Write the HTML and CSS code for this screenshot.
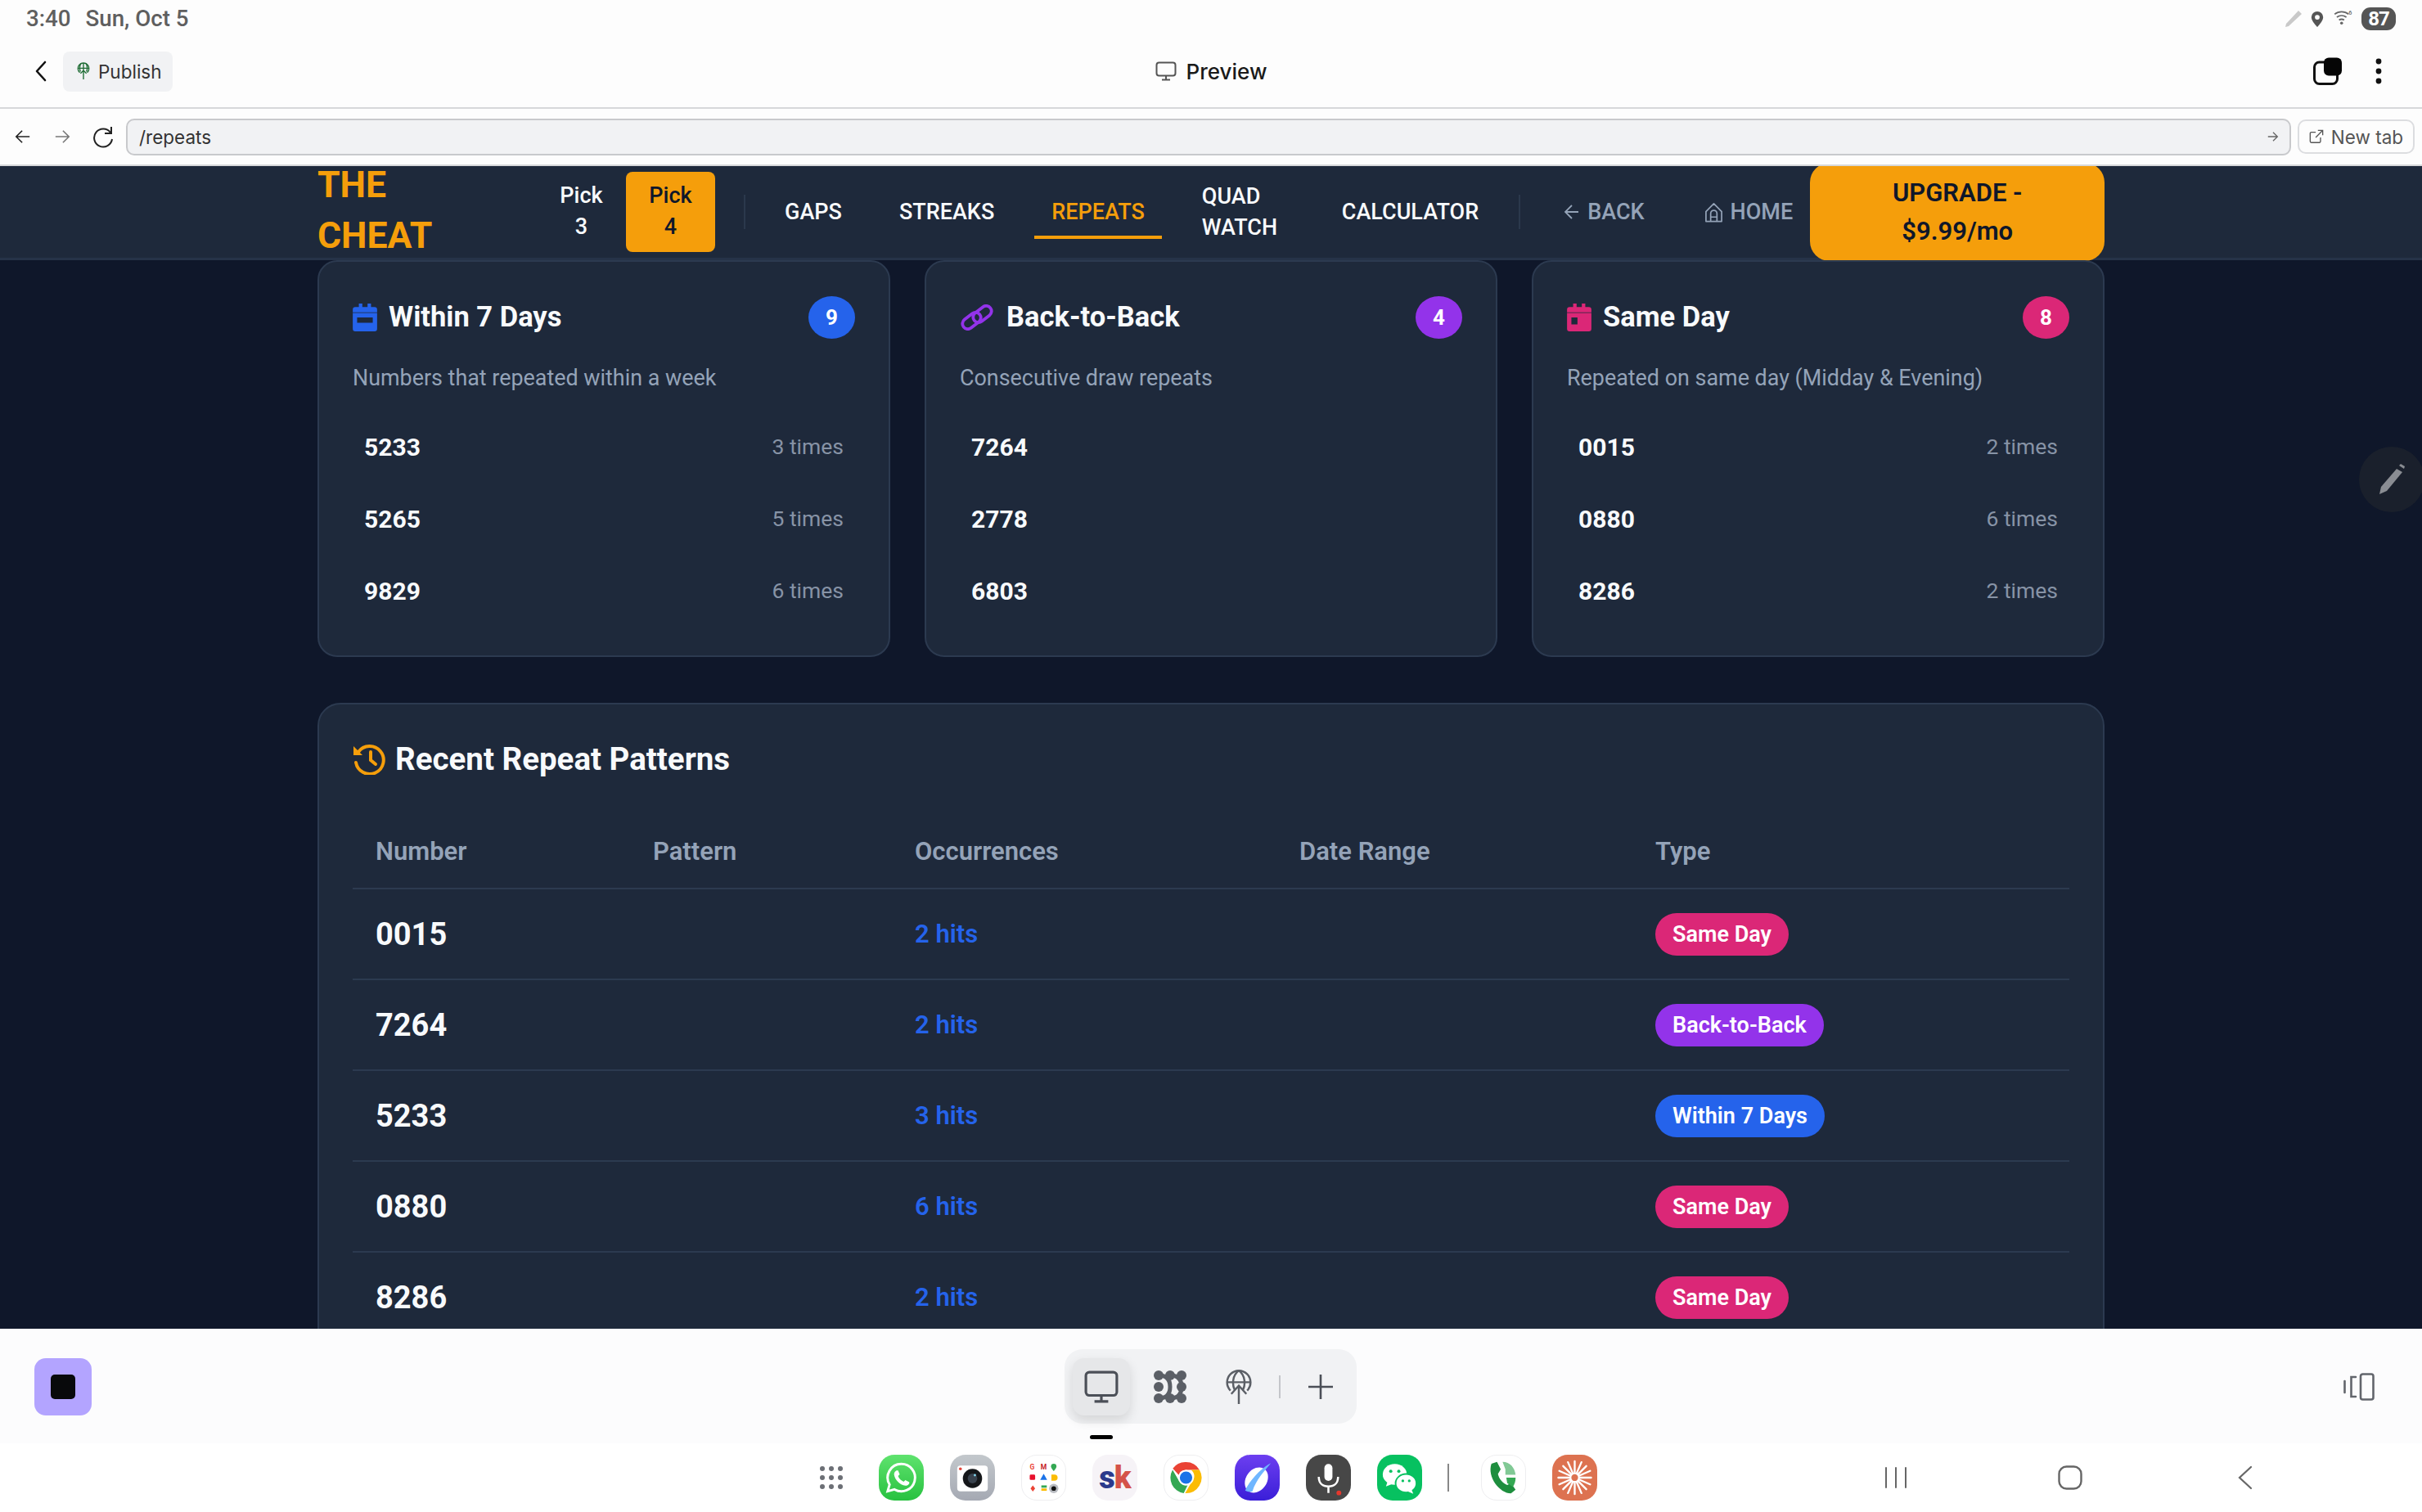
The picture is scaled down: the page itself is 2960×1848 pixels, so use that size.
FILE: index.html
```html
<!DOCTYPE html>
<html lang="en">

<head>
    <meta charset="UTF-8">
    <meta name="viewport" content="width=device-width, initial-scale=1.0">
    <title>Repeats</title>
    <link rel="stylesheet" href="styles.css">
</head>

<body>
    <div class="device">
        <!-- status bar -->
        <div class="status">
            <span class="clock">3:40</span>
            <span class="date">Sun, Oct 5</span>
            <div class="status_icons">
                <svg class="st_pen" viewBox="0 0 22 22"><path d="M17 1l4 4L5 20l-4 1 1-4z" fill="#c9c9c9"/></svg>
                <svg class="st_pin" viewBox="0 0 20 26"><path d="M10 1a9 9 0 0 0-9 9c0 6 9 15 9 15s9-9 9-15a9 9 0 0 0-9-9z" fill="#555"/><circle cx="10" cy="10" r="3.600" fill="#fff"/></svg>
                <svg class="st_wifi" viewBox="0 0 26 20"><g fill="none" stroke="#666" stroke-width="2"><path d="M1 6a15 15 0 0 1 19 0"/><path d="M4 10a11 11 0 0 1 13 0"/><path d="M7 14a6 6 0 0 1 7 0"/></g><circle cx="10.500" cy="18" r="2" fill="#666"/><text x="20" y="7" class="st_six">6</text></svg>
                <span class="battery">87</span>
            </div>
        </div>

        <!-- app bar -->
        <div class="appbar">
            <div class="appbar_left">
                <svg class="chev" viewBox="0 0 20 28"><path d="M15 3L5 14l10 11" fill="none" stroke="#111" stroke-width="2.600" stroke-linecap="round" stroke-linejoin="round"/></svg>
                <div class="publish">
                    <svg class="publish_icon" viewBox="0 0 20 24"><g fill="none" stroke="#1d6b33" stroke-width="1.500"><path d="M5 14a7.500 7.500 0 1 1 10 0"/><path d="M2.500 8h15M10 1v22M6.500 1.500c-2 4-2 8-.5 11M13.500 1.500c2 4 2 8 .5 11M6 15l4-4 4 4"/></g></svg>
                    <span>Publish</span>
                </div>
            </div>
            <div class="preview">
                <svg class="preview_icon" viewBox="0 0 26 24"><rect x="1.500" y="1.500" width="23" height="16" rx="3" fill="none" stroke="#555" stroke-width="2"/><path d="M13 18v4M8 22.500h10" stroke="#555" stroke-width="2"/></svg>
                <span>Preview</span>
            </div>
            <div class="appbar_right">
                <svg class="tabs_icon" viewBox="0 0 36 34"><rect x="1.500" y="6" width="28" height="26.500" rx="6" fill="none" stroke="#111" stroke-width="3"/><rect x="13" y="0.500" width="22" height="22" rx="6" fill="#050505"/></svg>
                <svg class="more_icon" viewBox="0 0 8 32"><circle cx="4" cy="4" r="3.400" fill="#111"/><circle cx="4" cy="16" r="3.400" fill="#111"/><circle cx="4" cy="28" r="3.400" fill="#111"/></svg>
            </div>
        </div>

        <!-- url bar -->
        <div class="urlbar">
            <svg class="url_btn" viewBox="0 0 22 22"><path d="M20 11H3M10 3l-8 8 8 8" fill="none" stroke="#222" stroke-width="1.800"/></svg>
            <svg class="url_btn" viewBox="0 0 22 22"><path d="M2 11h17M12 3l8 8-8 8" fill="none" stroke="#777" stroke-width="1.800"/></svg>
            <svg class="url_reload" viewBox="0 0 28 28"><path d="M23 9a11 11 0 1 0 2 8" fill="none" stroke="#222" stroke-width="2"/><path d="M24 2v8h-8" fill="none" stroke="#222" stroke-width="2"/></svg>
            <div class="url_input">
                <span>/repeats</span>
                <svg class="url_go" viewBox="0 0 18 18"><path d="M2 9h13M9 3l6 6-6 6" fill="none" stroke="#666" stroke-width="1.500"/></svg>
            </div>
            <div class="newtab">
                <svg class="newtab_icon" viewBox="0 0 20 20"><path d="M9 4H3a1.500 1.500 0 0 0-1.500 1.500v11A1.500 1.500 0 0 0 3 18h11a1.500 1.500 0 0 0 1.500-1.500V11M9 11L18 2M12 1.500h6.500V8" fill="none" stroke="#555" stroke-width="1.500"/></svg>
                <span>New tab</span>
            </div>
        </div>

        <!-- the page in the webview -->
        <div class="view">
            <div class="topnav">
                <div class="topnav_in">
                    <div class="logo">THE<br>CHEAT</div>
                    <div class="picks">
                        <div class="pick">Pick<br>3</div>
                        <div class="pick pick_on">Pick<br>4</div>
                    </div>
                    <div class="nav_sep first_sep"></div>
                    <div class="links">
                        <a class="link">GAPS</a>
                        <a class="link">STREAKS</a>
                        <a class="link link_on">REPEATS</a>
                        <a class="link link_quad">QUAD<br>WATCH</a>
                        <a class="link">CALCULATOR</a>
                    </div>
                    <div class="nav_sep second_sep"></div>
                    <a class="link link_dim link_back">
                        <svg class="back_icon" viewBox="0 0 20 22"><path d="M18 11H3M10 3l-8 8 8 8" fill="none" stroke="#94a3b8" stroke-width="1.800"/></svg>BACK</a>
                    <a class="link link_dim link_home">
                        <svg class="home_icon" viewBox="0 0 24 26"><path d="M2 12L12 2l10 10v12.500H2zM8 24.500V14.500a4 4 0 0 1 8 0v10M8 19h8" fill="none" stroke="#94a3b8" stroke-width="1.800" stroke-linejoin="round"/></svg>HOME</a>
                    <div class="upgrade">UPGRADE -<br>$9.99/mo</div>
                </div>
            </div>

            <div class="container">
                <div class="cards">
                    <div class="card">
                        <div class="card_head">
                            <svg class="card_icon cal" viewBox="0 0 28 32"><path d="M3 4h4V0h4v4h6V0h4v4h4a3 3 0 0 1 3 3v3H0V7a3 3 0 0 1 3-3zM0 10.800h28V29a3 3 0 0 1-3 3H3a3 3 0 0 1-3-3zM5 16v6h18v-6z" fill="#2563eb" fill-rule="evenodd"/></svg>
                            <span class="card_title">Within 7 Days</span>
                            <span class="count bg_blue">9</span>
                        </div>
                        <p class="desc">Numbers that repeated within a week</p>
                        <div class="row"><b>5233</b><span>3 times</span></div>
                        <div class="row"><b>5265</b><span>5 times</span></div>
                        <div class="row"><b>9829</b><span>6 times</span></div>
                    </div>
                    <div class="card">
                        <div class="card_head">
                            <svg class="card_icon link_icon" viewBox="0 0 42 32"><g fill="none" stroke="#9333ea" stroke-width="3.800"><rect x="-12.500" y="-6.500" width="25" height="13" rx="6.500" transform="translate(14.500 20) rotate(-38)"/><rect x="-12.500" y="-6.500" width="25" height="13" rx="6.500" transform="translate(27.500 12) rotate(-38)"/></g></svg>
                            <span class="card_title">Back-to-Back</span>
                            <span class="count bg_purple">4</span>
                        </div>
                        <p class="desc">Consecutive draw repeats</p>
                        <div class="row"><b>7264</b></div>
                        <div class="row"><b>2778</b></div>
                        <div class="row"><b>6803</b></div>
                    </div>
                    <div class="card">
                        <div class="card_head">
                            <svg class="card_icon cal" viewBox="0 0 28 32"><path d="M3 4h4V0h4v4h6V0h4v4h4a3 3 0 0 1 3 3v3H0V7a3 3 0 0 1 3-3zM0 10.800h28V29a3 3 0 0 1-3 3H3a3 3 0 0 1-3-3zM5 16v8h7v-8z" fill="#db2777" fill-rule="evenodd"/></svg>
                            <span class="card_title">Same Day</span>
                            <span class="count bg_pink">8</span>
                        </div>
                        <p class="desc">Repeated on same day (Midday &amp; Evening)</p>
                        <div class="row"><b>0015</b><span>2 times</span></div>
                        <div class="row"><b>0880</b><span>6 times</span></div>
                        <div class="row"><b>8286</b><span>2 times</span></div>
                    </div>
                </div>

                <div class="recent">
                    <h2 class="recent_title">
                        <svg class="recent_icon" viewBox="0 0 40 38"><g fill="none" stroke="#f59e0b" stroke-width="4" stroke-linecap="round"><path d="M7 10a17 17 0 1 1-3 13"/><path d="M22 10v10l6 5"/></g><path d="M1 3v11h11z" fill="#f59e0b"/></svg>
                        Recent Repeat Patterns
                    </h2>
                    <table class="patterns">
                        <thead>
                            <tr>
                                <th class="col_num">Number</th>
                                <th class="col_pat">Pattern</th>
                                <th class="col_occ">Occurrences</th>
                                <th class="col_date">Date Range</th>
                                <th>Type</th>
                            </tr>
                        </thead>
                        <tbody>
                            <tr><td class="num">0015</td><td></td><td class="hits">2 hits</td><td></td><td><span class="tag bg_pink">Same Day</span></td></tr>
                            <tr><td class="num">7264</td><td></td><td class="hits">2 hits</td><td></td><td><span class="tag bg_purple">Back-to-Back</span></td></tr>
                            <tr><td class="num">5233</td><td></td><td class="hits">3 hits</td><td></td><td><span class="tag bg_blue">Within 7 Days</span></td></tr>
                            <tr><td class="num">0880</td><td></td><td class="hits">6 hits</td><td></td><td><span class="tag bg_pink">Same Day</span></td></tr>
                            <tr><td class="num">8286</td><td></td><td class="hits">2 hits</td><td></td><td><span class="tag bg_pink">Same Day</span></td></tr>
                        </tbody>
                    </table>
                </div>
            </div>

            <!-- floating pen handle -->
            <div class="fab">
                <svg viewBox="0 0 36 40" class="fab_icon"><path d="M25 7l7 4-19 23-9 4 2-9z" fill="#8a8d93"/><path d="M28 3l2-2 5 3-1 3z" fill="#8a8d93"/></svg>
            </div>
        </div>

        <!-- bottom tool strip -->
        <div class="tools">
            <div class="stop"><div class="stop_in"></div></div>
            <div class="tool_mid">
                <div class="tool_pill">
                    <div class="tool tool_on">
                        <svg viewBox="0 0 40 40" class="tool_svg"><rect x="2" y="3" width="36" height="27" rx="4" fill="none" stroke="#4b4f57" stroke-width="3"/><path d="M20 30v6M12 37h16" stroke="#4b4f57" stroke-width="3"/></svg>
                    </div>
                    <div class="tool">
                        <svg viewBox="0 0 42 42" class="tool_svg"><g fill="#5b5f66"><circle cx="7" cy="7" r="6"/><circle cx="21" cy="7" r="6"/><circle cx="35" cy="7" r="6"/><circle cx="7" cy="21" r="6"/><circle cx="35" cy="21" r="6"/><circle cx="7" cy="35" r="6"/><circle cx="21" cy="35" r="6"/><circle cx="35" cy="35" r="6"/></g><g fill="none" stroke="#5b5f66" stroke-width="5"><path d="M7 7Q21 7 21 21Q21 35 7 35"/><path d="M21 7Q35 7 35 21Q35 35 21 35"/></g></svg>
                    </div>
                    <div class="tool">
                        <svg viewBox="0 0 32 41" class="tool_svg"><g fill="none" stroke="#5b5f66" stroke-width="2.400"><path d="M6 25a14 14 0 1 1 20 0"/><path d="M2 15h28M16 1c-8 6-8 17-5 23M16 1c8 6 8 17 5 23M16 41V19M7 29l9-10 9 10"/></g></svg>
                    </div>
                    <div class="tool_sep"></div>
                    <div class="tool tool_last">
                        <svg viewBox="0 0 32 32" class="tool_plus"><path d="M16 1v30M1 16h30" stroke="#4b4f57" stroke-width="2.600"/></svg>
                    </div>
                </div>
                <div class="tool_dash"></div>
            </div>
            <svg class="split_icon" viewBox="0 0 38 34"><g fill="none" stroke="#62656c" stroke-width="2.600" stroke-linecap="round"><path d="M1.500 10v14M15 5H9.500v24H15"/><rect x="21" y="1.500" width="15.500" height="31" rx="2.500"/></g></svg>
        </div>

        <!-- task bar -->
        <div class="taskbar">
            <div class="apps">
                <svg class="app_grid" viewBox="0 0 30 30"><g fill="#6c6f75"><circle cx="4" cy="4" r="3"/><circle cx="15" cy="4" r="3"/><circle cx="26" cy="4" r="3"/><circle cx="4" cy="15" r="3"/><circle cx="15" cy="15" r="3"/><circle cx="26" cy="15" r="3"/><circle cx="4" cy="26" r="3"/><circle cx="15" cy="26" r="3"/><circle cx="26" cy="26" r="3"/></g></svg>

                <div class="app app_whats">
                    <svg viewBox="0 0 56 56"><path d="M28 11a17 17 0 0 0-14.600 25.700L11 45l8.600-2.300A17 17 0 1 0 28 11z" fill="none" stroke="#fff" stroke-width="3"/><path d="M22 19c-2 1-3 3-3 5 1 7 7 13 14 14 2 0 4-1 5-3 0-1 0-2-1-2l-4-2-2 2c-3-1-6-4-7-7l2-2-2-5z" fill="#fff"/></svg>
                </div>
                <div class="app app_cam">
                    <svg viewBox="0 0 56 56"><rect x="9" y="13" width="38" height="32" rx="4" fill="#fff"/><circle cx="28" cy="29" r="12" fill="#15171a"/><circle cx="28" cy="29" r="6" fill="#39424d"/><circle cx="31" cy="25" r="1.500" fill="#7fd0e8"/><circle cx="13" cy="17" r="1.800" fill="#e2453a"/></svg>
                </div>
                <div class="app app_folder">
                    <svg viewBox="0 0 56 56"><g class="mini"><text x="10" y="17" fill="#ea4335">G</text><text x="28" y="17" fill="#c5221f" text-anchor="middle">M</text></g><path d="M41 10a3.500 3.500 0 0 1 3.500 3.500c0 2.500-3.500 6-3.500 6s-3.500-3.500-3.500-6A3.500 3.500 0 0 1 41 10z" fill="#34a853"/><rect x="10" y="24" width="7" height="7" rx="1.500" fill="#e8112d"/><path d="M28 23l4.500 8h-9z" fill="#1a73e8"/><path d="M38 24h4a4 4 0 0 1 0 8h-4z" fill="#fbbc04"/><path d="M14 38l3 4-3 4-3-4z" fill="#ea4335"/><rect x="25" y="38" width="7" height="3" fill="#34a853"/><rect x="25" y="42" width="7" height="3" fill="#fbbc04"/><circle cx="41" cy="42" r="6" fill="#b9bcc2"/><circle cx="41" cy="42" r="3" fill="#111"/></svg>
                </div>
                <div class="app app_sk"><span class="sk_s">s</span><span class="sk_k">k</span></div>
                <div class="app app_chrome">
                    <svg viewBox="0 0 56 56"><g transform="translate(28 28) scale(1.180) translate(-28 -28)"><path d="M28 11a17 17 0 0 1 14.700 8.500H28a8.500 8.500 0 0 0-8 5.600L13.500 18A17 17 0 0 1 28 11z" fill="#ea4335"/><path d="M13.300 19.500l7.400 12.800a8.500 8.500 0 0 0 9 4L25.500 45A17 17 0 0 1 13.300 19.500z" fill="#34a853"/><path d="M42.700 19.500A17 17 0 0 1 27 45l7-12.100a8.500 8.500 0 0 0-.600-13.400z" fill="#fbbc04"/><circle cx="28" cy="28" r="8.500" fill="#fff"/><circle cx="28" cy="28" r="6.800" fill="#1a73e8"/></g></svg>
                </div>
                <div class="app app_orbit">
                    <svg viewBox="0 0 56 56"><ellipse cx="27" cy="31" rx="13" ry="17" transform="rotate(35 27 31)" fill="#fff"/><path d="M45 10C36 14 19 30 13 44c4 2 6 2 9 1C27 30 37 20 45 10z" fill="#6fb6ff"/></svg>
                </div>
                <div class="app app_mic">
                    <svg viewBox="0 0 56 56"><rect x="23" y="11" width="10" height="21" rx="5" fill="#fff"/><path d="M16 27c0 8 5 12 12 12s12-4 12-12M28 39v8" fill="none" stroke="#fff" stroke-width="2.600"/><circle cx="41" cy="47" r="3" fill="#e5372c"/></svg>
                </div>
                <div class="app app_wechat">
                    <svg viewBox="0 0 56 56"><ellipse cx="22" cy="24" rx="15" ry="13" fill="#fff"/><path d="M13 33l-2 6 8-3z" fill="#fff"/><ellipse cx="36" cy="35" rx="13" ry="11.500" fill="#fff" stroke="#07c160" stroke-width="2"/><path d="M43 43l2 5-7-3z" fill="#fff"/><circle cx="17" cy="20" r="2" fill="#07c160"/><circle cx="27" cy="20" r="2" fill="#07c160"/><circle cx="32" cy="32" r="1.700" fill="#07c160"/><circle cx="40" cy="32" r="1.700" fill="#07c160"/></svg>
                </div>
                <div class="app_sep"></div>
                <div class="app app_phone">
                    <svg viewBox="0 0 56 56"><g transform="translate(28 28) scale(1.200) translate(-28 -28)"><path d="M15 13l6-2 4 8-3 5c1 5 5 10 10 12l4-2 5 7-5 4C24 45 10 27 15 13z" fill="#1e8e3e"/><path d="M27 11c8 0 13 6 14 14H30v-6z" fill="#81c995"/><path d="M31 28h10c0 4-1 7-3 10l-6-4z" fill="#34a853"/></g></svg>
                </div>
                <div class="app app_star">
                    <svg viewBox="0 0 56 56"><g transform="translate(28 28) scale(1.200) translate(-28 -28)"><g stroke="#fff" stroke-width="2" stroke-linecap="round"><path d="M28 11v34M11 28h34M16 16l24 24M40 16L16 40M21 12l14 32M35 12L21 44M12 21l32 14M44 21L12 35"/></g><circle cx="28" cy="28" r="3.500" fill="#dd7250"/></g></svg>
                </div>
            </div>
            <div class="keys">
                <svg class="key_recent" viewBox="0 0 28 28"><path d="M2 2v24M14 2v24M26 2v24" stroke="#666" stroke-width="2" stroke-linecap="round"/></svg>
                <svg class="key_home" viewBox="0 0 30 30"><rect x="1.500" y="1.500" width="27" height="27" rx="9" fill="none" stroke="#666" stroke-width="2.400"/></svg>
                <svg class="key_back" viewBox="0 0 18 30"><path d="M16 2L2 15l14 13" fill="none" stroke="#666" stroke-width="2.200" stroke-linecap="round"/></svg>
            </div>
        </div>
    </div>
</body>

</html>
```

FILE: styles.css
```css
* {
    box-sizing: border-box;
}

body {
    margin: 0;
    font-family: "Roboto", "Noto Sans", sans-serif;
    background: #fdfdfd;
}

svg {
    display: block;
    flex: none;
}

.device {
    width: 2960px;
    height: 1848px;
    display: flex;
    flex-direction: column;
    overflow: hidden;
}

/* status bar */
.status {
    height: 44px;
    padding: 0 32px;
    display: flex;
    align-items: center;
    font-size: 27.700px;
    font-weight: 500;
    color: #5f5f5f;
}

.clock {
    margin-right: 18px;
}

.status_icons {
    margin-left: auto;
    margin-top: 2px;
    display: flex;
    align-items: center;
}

.st_pen {
    width: 22px;
    height: 22px;
    margin-right: 10px;
}

.st_pin {
    width: 16px;
    height: 21px;
    margin-right: 12px;
}

.st_wifi {
    width: 24px;
    height: 18px;
    margin-right: 10px;
    margin-top: -4px;
}

.st_six {
    font-size: 8px;
    fill: #666;
}

.battery {
    width: 42px;
    height: 28px;
    border-radius: 11px;
    background: #555;
    color: #fff;
    font-size: 24px;
    font-weight: 700;
    line-height: 28px;
    text-align: center;
    letter-spacing: -1px;
}

/* app bar */
.appbar {
    height: 89px;
    padding: 2px 40px 3px 40px;
    border-bottom: 2px solid #d7d8da;
    display: flex;
    align-items: center;
    justify-content: space-between;
}

.appbar_left {
    width: 600px;
    display: flex;
    align-items: center;
}

.chev {
    width: 20px;
    height: 28px;
    margin-right: 17px;
}

.publish {
    width: 134px;
    height: 49px;
    border-radius: 8px;
    background: #f1f2f4;
    display: flex;
    align-items: center;
    padding-left: 16px;
    font-family: "Inter", sans-serif;
    font-size: 22.500px;
    color: #333;
}

.publish_icon {
    width: 18px;
    height: 22px;
    margin-right: 9px;
}

.preview {
    display: flex;
    align-items: center;
    font-family: "Inter", sans-serif;
    font-size: 26px;
    font-weight: 500;
    color: #1a1a1a;
}

.preview_icon {
    width: 26px;
    height: 24px;
    margin-right: 12px;
}

.appbar_right {
    width: 600px;
    display: flex;
    justify-content: flex-end;
    align-items: center;
}

.tabs_icon {
    width: 36px;
    height: 34px;
}

.more_icon {
    width: 8px;
    height: 32px;
    margin-left: 40px;
    margin-right: 9px;
}

/* url bar */
.urlbar {
    height: 70px;
    padding: 0 9px 0 18px;
    display: flex;
    align-items: center;
    border-bottom: 2px solid #d7d8da;
}

.url_btn {
    width: 20px;
    height: 20px;
    margin-right: 28px;
}

.url_reload {
    width: 28px;
    height: 28px;
    margin-left: -2px;
    margin-right: 14px;
}

.url_input {
    flex: 1;
    height: 45px;
    border: 2px solid #c8c9cc;
    border-radius: 10px;
    background: #f1f2f4;
    padding: 0 12px 0 14px;
    display: flex;
    align-items: center;
    justify-content: space-between;
    font-family: "Inter", sans-serif;
    font-size: 22.500px;
    color: #333;
}

.url_go {
    width: 16px;
    height: 16px;
}

.newtab {
    width: 143px;
    height: 42px;
    margin-left: 8px;
    border: 2px solid #dcdde0;
    border-radius: 10px;
    display: flex;
    align-items: center;
    justify-content: center;
    font-family: "Inter", sans-serif;
    font-size: 22.500px;
    color: #555;
}

.newtab_icon {
    width: 18px;
    height: 18px;
    margin-right: 9px;
}

/* webview */
.view {
    height: 1421px;
    position: relative;
    overflow: hidden;
    background: #0f172a;
    color: #f8fafc;
}

.topnav {
    height: 115px;
    background: #1e293b;
    border-bottom: 3px solid #263348;
}

.topnav_in {
    width: 2184px;
    height: 112px;
    margin: 0 auto;
    display: flex;
    align-items: center;
}

.logo {
    width: 268px;
    flex: none;
    padding-bottom: 4px;
    font-size: 44.500px;
    font-weight: 700;
    line-height: 62px;
    color: #f59e0b;
}

.picks {
    display: flex;
    flex: none;
}

.pick {
    width: 109px;
    height: 98px;
    border-radius: 8px;
    padding-top: 10px;
    font-size: 27px;
    font-weight: 500;
    line-height: 38px;
    text-align: center;
}

.pick_on {
    background: #f59e0b;
    color: #0f172a;
}

.nav_sep {
    width: 2px;
    height: 42px;
    background: #2b384c;
    flex: none;
}

.first_sep {
    margin: 0 27px 0 35px;
}

.second_sep {
    margin: 0 32px 0 28px;
}

.links {
    display: flex;
    flex: none;
    gap: 28px;
}

.link {
    height: 98px;
    padding: 0 21px;
    display: flex;
    flex: none;
    align-items: center;
    font-size: 27px;
    font-weight: 500;
    line-height: 38px;
    color: #f8fafc;
}

.link_on {
    position: relative;
    color: #f59e0b;
}

.link_on::after {
    content: "";
    position: absolute;
    left: 0;
    right: 0;
    bottom: 16px;
    height: 4px;
    background: #f59e0b;
}

.link_quad {
    width: 143px;
}

.link_dim {
    color: #94a3b8;
    gap: 9px;
}

.link_home {
    margin-left: 31px;
}

.back_icon {
    width: 20px;
    height: 22px;
}

.home_icon {
    width: 23px;
    height: 25px;
}

.upgrade {
    width: 360px;
    height: 120px;
    margin-left: auto;
    flex: none;
    border-radius: 24px;
    background: #f59e0b;
    color: #0f172a;
    font-size: 31px;
    font-weight: 600;
    line-height: 47px;
    display: flex;
    align-items: center;
    justify-content: center;
    text-align: center;
}

.container {
    width: 2184px;
    margin: 0 auto;
}

.cards {
    display: grid;
    grid-template-columns: repeat(3, 1fr);
    gap: 42px;
}

.card {
    height: 485px;
    background: #1e293b;
    border: 2px solid #2c3a50;
    border-radius: 24px;
    padding: 42px 41px 0;
}

.card_head {
    height: 52px;
    display: flex;
    align-items: center;
}

.card_icon {
    margin-right: 14px;
}

.cal {
    width: 30px;
    height: 34px;
}

.link_icon {
    width: 42px;
    height: 32px;
    margin-right: 15px;
}

.card_title {
    padding-bottom: 3px;
    font-size: 34.500px;
    font-weight: 700;
}

.count {
    width: 57px;
    height: 52px;
    margin-left: auto;
    border-radius: 50%;
    font-size: 26px;
    font-weight: 700;
    color: #fff;
    display: flex;
    align-items: center;
    justify-content: center;
}

.bg_blue {
    background: #2563eb;
}

.bg_purple {
    background: #9333ea;
}

.bg_pink {
    background: #db2777;
}

.desc {
    margin: 28px 0 20px;
    font-size: 26.900px;
    line-height: 40px;
    color: #94a3b8;
}

.row {
    height: 88px;
    padding: 0 14px;
    display: flex;
    align-items: center;
    justify-content: space-between;
}

.row b {
    font-size: 30px;
    font-weight: 700;
}

.row span {
    font-size: 26.500px;
    padding-bottom: 2px;
    color: #8793a6;
}

/* recent table */
.recent {
    margin-top: 56px;
    height: 900px;
    background: #1e293b;
    border: 2px solid #2c3a50;
    border-radius: 28px;
    padding: 40px 41px 0;
}

.recent_title {
    margin: 0 0 41px;
    height: 56px;
    padding-bottom: 3px;
    display: flex;
    align-items: center;
    font-size: 38.500px;
    font-weight: 700;
}

.recent_icon {
    width: 40px;
    height: 38px;
    margin-right: 12px;
}

.patterns {
    width: 100%;
    border-collapse: collapse;
    table-layout: fixed;
}

.patterns th {
    height: 88px;
    padding: 0 29px 2px;
    text-align: left;
    font-size: 31px;
    font-weight: 600;
    color: #94a3b8;
    border-bottom: 2px solid #2c3a50;
}

.patterns th.col_num,
.patterns td.num {
    padding-left: 28px;
}

.col_num {
    width: 338px;
}

.col_pat {
    width: 320px;
}

.col_occ {
    width: 470px;
}

.col_date {
    width: 435px;
}

.patterns td {
    height: 111px;
    padding: 0 29px;
    border-bottom: 2px solid #2c3a50;
}

.num {
    font-size: 38px;
    font-weight: 700;
}

.hits {
    font-size: 31px;
    font-weight: 600;
    color: #2563eb;
}

.tag {
    display: inline-block;
    height: 52px;
    padding: 0 21px;
    border-radius: 26px;
    font-size: 27px;
    font-weight: 600;
    line-height: 52px;
    color: #fff;
}

.fab {
    position: absolute;
    left: 2883px;
    top: 343px;
    width: 80px;
    height: 80px;
    border-radius: 50%;
    background: #1a202c;
    display: flex;
    align-items: center;
    justify-content: center;
}

.fab_icon {
    width: 36px;
    height: 40px;
    margin-left: -2px;
}

/* bottom strip */
.tools {
    height: 140px;
    padding: 0 58px 0 42px;
    background: #fcfcfd;
    display: flex;
    align-items: flex-start;
}

.stop {
    width: 70px;
    height: 70px;
    margin-top: 36px;
    border-radius: 14px;
    background: #b3a4ff;
    display: flex;
    align-items: center;
    justify-content: center;
}

.stop_in {
    width: 30px;
    height: 30px;
    border-radius: 5px;
    background: #08090b;
}

.tool_mid {
    margin-left: 1189px;
    margin-top: 25px;
}

.tool_pill {
    width: 357px;
    height: 91px;
    padding: 0 10px;
    border-radius: 22px;
    background: #f1f2f4;
    display: flex;
    align-items: center;
}

.tool {
    width: 70px;
    height: 70px;
    flex: none;
    margin-right: 14px;
    border-radius: 14px;
    display: flex;
    align-items: center;
    justify-content: center;
}

.tool_last {
    margin-right: 0;
}

.tool_on {
    background: #e6e7e9;
    box-shadow: 0 6px 14px rgba(0, 0, 0, 0.12);
}

.tool_svg {
    width: 42px;
    height: 42px;
}

.tool_plus {
    width: 32px;
    height: 32px;
}

.tool_sep {
    width: 2px;
    height: 28px;
    flex: none;
    margin-right: 14px;
    background: #c4c6ca;
}

.tool_dash {
    width: 28px;
    height: 5px;
    margin: 14px 0 0 31px;
    border-radius: 3px;
    background: #000;
}

.split_icon {
    width: 38px;
    height: 34px;
    margin-top: 54px;
    margin-left: auto;
}

/* task bar */
.taskbar {
    height: 84px;
    background: #fff;
    display: flex;
    align-items: center;
    padding-left: 1001px;
}

.apps {
    display: flex;
    align-items: center;
}

.app_grid {
    width: 30px;
    height: 30px;
    margin-right: 43px;
}

.app {
    width: 55px;
    height: 56px;
    margin-right: 32px;
    border-radius: 19px;
    overflow: hidden;
    display: flex;
    align-items: center;
    justify-content: center;
}

.app svg {
    width: 100%;
    height: 100%;
}

.app_whats {
    background: linear-gradient(#5fe36e, #28c140);
}

.app_cam {
    background: linear-gradient(#c3c8cc, #a5a9b3);
}

.app_folder,
.app_chrome,
.app_phone {
    background: #fff;
    border: 1px solid #eeeef0;
}

.app_sk {
    background: #f6f3f7;
    font-size: 38px;
    font-weight: 900;
    letter-spacing: -1px;
}

.sk_s {
    color: #2b3a8c;
}

.sk_k {
    color: #d4534a;
}

.app_orbit {
    background: linear-gradient(#6d3ff0, #3a1ed8);
}

.app_mic {
    background: #474747;
}

.app_wechat {
    background: #07c160;
}

.app_star {
    background: #dd7250;
}

.mini {
    font-size: 9px;
    font-weight: 700;
}

.app_sep {
    width: 2px;
    height: 34px;
    margin: 0 39px 0 -1px;
    background: #888;
}

.keys {
    margin-left: 319px;
    display: flex;
    align-items: center;
}

.key_recent {
    width: 28px;
    height: 28px;
}

.key_home {
    width: 30px;
    height: 30px;
    margin-left: 184px;
}

.key_back {
    width: 18px;
    height: 30px;
    margin-left: 190px;
}
```
